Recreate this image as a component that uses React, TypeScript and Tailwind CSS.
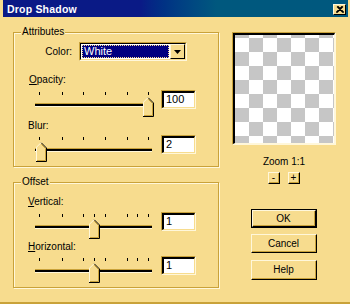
import React from "react";

const opacityTicks = [4, 27, 48, 70, 92, 113];
const offsetTicks = [4, 27, 48, 59, 70, 92, 102, 113];

const Thumb: React.FC<{ left: number }> = ({ left }) => (
  <svg
    className="absolute top-[5px]"
    style={{ left }}
    width="11"
    height="20"
    viewBox="0 0 11 20"
  >
    <polygon points="0,5 5,0 10,5 10,19 0,19" fill="#f7dc8e" />
    <path d="M0.5 19 V5.2 L5 0.7" stroke="#fff7da" fill="none" />
    <path d="M5.3 0.8 L10.5 6 V19.5 H0" stroke="#000" fill="none" />
    <path d="M5.3 2.3 L9.5 6.5 V18.5 H1" stroke="#c9a23a" fill="none" />
  </svg>
);

const Slider: React.FC<{ ticks: number[]; thumb: number }> = ({ ticks, thumb }) => (
  <div className="relative w-[117px] h-[24px] shrink-0">
    {ticks.map((t) => (
      <div key={t} className="absolute top-0 w-[1px] h-[3px] bg-black" style={{ left: t }} />
    ))}
    <div className="absolute left-0 right-0 top-[11px] h-[4px] bg-black border-t border-b border-t-[#c9a23a] border-b-[#fff7da]" />
    <Thumb left={thumb} />
  </div>
);

const EditBox: React.FC<{ value: string }> = ({ value }) => (
  <div className="ml-[9px] -mt-[2px] w-[35px] h-[19px] border-t border-l border-t-[#c9a23a] border-l-[#c9a23a] border-b border-r border-b-[#fff7da] border-r-[#fff7da]">
    <div className="h-full bg-white border-t-2 border-l-2 border-black border-b border-r border-b-[#f7dc8e] border-r-[#f7dc8e] pl-[2px] text-[11px] leading-[13px] text-black">
      {value}
    </div>
  </div>
);

const SliderRow: React.FC<{ ticks: number[]; thumb: number; value: string; className: string }> = ({
  ticks,
  thumb,
  value,
  className,
}) => (
  <div className={`flex items-start pl-[21px] ${className}`}>
    <Slider ticks={ticks} thumb={thumb} />
    <EditBox value={value} />
  </div>
);

const Group: React.FC<{ label: string; className: string; children: React.ReactNode }> = ({
  label,
  className,
  children,
}) => (
  <div
    className={`relative w-[206px] border border-[#c9a23a] shadow-[inset_1px_1px_0_#fff7da,1px_1px_0_#fff7da] ${className}`}
  >
    <span className="absolute -top-[7px] left-[7px] px-[1px] bg-[#f7dc8e] leading-[12px]">{label}</span>
    {children}
  </div>
);

const Button: React.FC<{ children: React.ReactNode; className: string; primary?: boolean }> = ({
  children,
  className,
  primary,
}) => (
  <div className={`${primary ? "border border-black" : ""} ${className}`}>
    <div className="h-full border-t border-l border-t-[#fff7da] border-l-[#fff7da] border-b border-r border-black">
      <div className="h-full flex items-center justify-center border-b border-r border-[#c9a23a]">
        {children}
      </div>
    </div>
  </div>
);

export default function App() {
  return (
    <div className="w-[350px] h-[304px] overflow-hidden bg-[#f7dc8e] pl-[3px] pr-[2px] border-b-2 border-b-[#c9a23a] font-['Liberation_Sans',Arial,sans-serif] text-[10px] text-black flex flex-col">
      <div className="h-[17px] shrink-0 flex items-start bg-linear-to-r from-[#0a1a86] from-40% to-[#00587e] to-62% pl-[4px] pr-[2px]">
        <span className="mt-[3px] text-white font-bold text-[10.5px] leading-[12px] tracking-[0.2px]">
          Drop Shadow
        </span>
        <div className="ml-auto mt-[4px] w-[13px] h-[11px] border-t border-l border-t-[#fff7da] border-l-[#fff7da] border-b border-r border-black bg-[#f7dc8e] flex items-center justify-center">
          <svg width="8" height="7" viewBox="0 0 8 7">
            <path d="M1 0.5 L7 6.5 M7 0.5 L1 6.5 M2 0.5 L8 6.5 M6 0.5 L0 6.5" stroke="#000" strokeWidth="1.1" />
          </svg>
        </div>
      </div>

      <div className="flex pt-[15px]">
        <div className="ml-[10px] flex flex-col">
          <Group label="Attributes" className="h-[135px]">
            <div className="flex items-center pt-[9px]">
              <span className="w-[58px] text-right leading-[12px]">Color:</span>
              <div className="ml-[7px] w-[108px] h-[19px] border-t border-l border-t-[#c9a23a] border-l-[#c9a23a] border-b border-r border-b-[#fff7da] border-r-[#fff7da]">
                <div className="h-full flex bg-white border-t border-l border-black border-b border-r border-b-[#f7dc8e] border-r-[#f7dc8e]">
                  <div className="flex-1 m-[1px] bg-[#000080] border border-dotted border-[#f7dc8e] text-white text-[11px] leading-[11px] pl-[1px]">
                    White
                  </div>
                  <div className="w-[15px] border-t border-l border-t-[#fff7da] border-l-[#fff7da] border-b border-r border-black bg-[#f7dc8e] flex items-center justify-center">
                    <svg width="7" height="4" viewBox="0 0 7 4">
                      <polygon points="0,0 7,0 3.5,4" fill="#000" />
                    </svg>
                  </div>
                </div>
              </div>
            </div>
            <div className="mt-[13px] pl-[15px] leading-[12px]">
              <span className="underline">O</span>pacity:
            </div>
            <SliderRow ticks={opacityTicks} thumb={108} value="100" className="mt-[6px]" />
            <div className="mt-[4px] pl-[14px] leading-[12px]">Blur:</div>
            <SliderRow ticks={opacityTicks} thumb={1} value="2" className="mt-[5px]" />
          </Group>

          <Group label="Offset" className="mt-[15px] h-[106px]">
            <div className="mt-[13px] pl-[14px] leading-[12px]">
              <span className="underline">V</span>ertical:
            </div>
            <SliderRow ticks={offsetTicks} thumb={54} value="1" className="mt-[6px]" />
            <div className="mt-[3px] pl-[14px] leading-[12px]">
              <span className="underline">H</span>orizontal:
            </div>
            <SliderRow ticks={offsetTicks} thumb={54} value="1" className="mt-[5px]" />
          </Group>
        </div>

        <div className="ml-[13px] w-[104px] flex flex-col items-center">
          <div className="w-[104px] h-[113px] border-t border-l border-t-[#c9a23a] border-l-[#c9a23a] border-b border-r border-b-[#fff7da] border-r-[#fff7da]">
            <div className="h-full border-t-2 border-l-2 border-black border-b border-r border-b-[#fff7da] border-r-[#fff7da] bg-[conic-gradient(#c6c6c6_25%,#ffffff_0_50%,#c6c6c6_0_75%,#ffffff_0)] bg-[length:28px_28px] bg-[position:0_3px]" />
          </div>
          <div className="mt-[11px] leading-[12px]">Zoom 1:1</div>
          <div className="mt-[4px] flex gap-[8px]">
            <Button className="w-[12px] h-[12px]">-</Button>
            <Button className="w-[12px] h-[12px]">+</Button>
          </div>
          <Button primary className="mt-[25px] w-[66px] h-[19px]">OK</Button>
          <Button className="mt-[6px] w-[66px] h-[19px]">Cancel</Button>
          <Button className="mt-[7px] w-[66px] h-[20px]">Help</Button>
        </div>
      </div>
    </div>
  );
}
